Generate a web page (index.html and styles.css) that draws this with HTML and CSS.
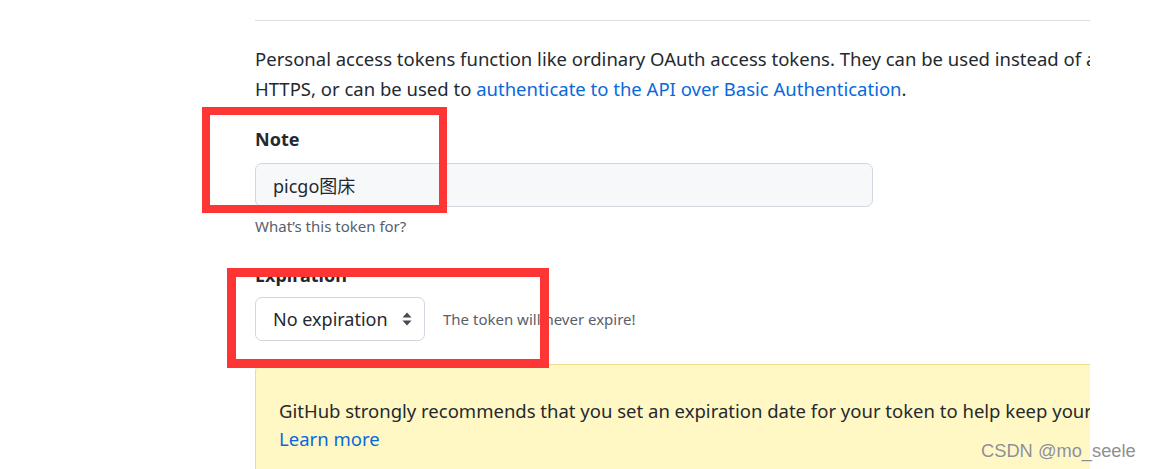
FILE: index.html
```html
<!DOCTYPE html>
<html lang="en">
<head>
<meta charset="utf-8">
<title>New personal access token</title>
<link rel="stylesheet" href="styles.css">
</head>
<body>
<div class="page">
  <div class="content">
    <div class="rule"></div>
    <p class="intro">Personal access tokens function like ordinary OAuth access tokens. They can be used instead of a<br>HTTPS, or can be used to <a href="#">authenticate to the API over Basic Authentication</a>.</p>
    <div class="field">
      <label class="label">Note</label>
      <div class="input">picgo图床</div>
      <p class="hint">What’s this token for?</p>
    </div>
    <div class="field field-exp">
      <label class="label">Expiration</label>
      <div class="select-row">
        <div class="select">
          <span>No expiration</span>
          <svg class="arrows" width="10" height="14" viewBox="0 0 10 14"><path d="M5 0.5 L9.5 5.5 H0.5 Z M5 13.5 L9.5 8.5 H0.5 Z" fill="#444d56"/></svg>
        </div>
        <span class="expire-note">The token will never expire!</span>
      </div>
    </div>
    <div class="flash">
      <p>GitHub strongly recommends that you set an expiration date for your token to help keep your</p>
      <a href="#">Learn more</a>
    </div>
  </div>
  <div class="mark mark-note"></div>
  <div class="mark mark-exp"></div>
  <div class="watermark">CSDN @mo_seele</div>
</div>
</body>
</html>
```

FILE: styles.css
```css
html, body {
  margin: 0;
  padding: 0;
  background: #ffffff;
}
body {
  font-family: "Noto Sans", "Noto Sans CJK SC", sans-serif;
  color: #24292f;
  height: 469px;
  overflow: hidden;
}
.page {
  position: relative;
  height: 469px;
}
.content {
  margin-left: 255px;
  width: 835px;
  height: 469px;
  overflow: hidden;
  padding-top: 20px;
  box-sizing: border-box;
}
.rule {
  width: 1000px;
  height: 1px;
  background: #d8dee4;
}
.intro {
  margin: 23px 0 0;
  font-size: 18.5px;
  line-height: 30px;
  white-space: nowrap;
}
a {
  color: #0969da;
  text-decoration: none;
}
.field {
  display: flex;
  flex-direction: column;
  align-items: flex-start;
}
.label {
  font-weight: 700;
  font-size: 18px;
  line-height: 27px;
  margin-top: 22px;
}
.field-exp .label {
  margin-top: 25px;
}
.input {
  margin-top: 10px;
  width: 618px;
  height: 44px;
  box-sizing: border-box;
  border: 1px solid #d0d7de;
  border-radius: 7px;
  background: #f6f8fa;
  padding: 0 17px;
  display: flex;
  align-items: center;
  font-size: 18px;
}
.hint {
  margin: 8px 0 0;
  font-size: 15px;
  line-height: 22px;
  color: #57606a;
}
.select-row {
  margin-top: 8px;
  display: flex;
  align-items: center;
  gap: 18px;
}
.select {
  width: 170px;
  height: 44px;
  box-sizing: border-box;
  border: 1px solid #d0d7de;
  border-radius: 7px;
  background: #ffffff;
  padding: 0 12px 0 17px;
  display: flex;
  align-items: center;
  justify-content: space-between;
  font-size: 18px;
}
.expire-note {
  font-size: 15px;
  color: #57606a;
}
.flash {
  margin-top: 23px;
  width: 1000px;
  box-sizing: border-box;
  background: #fff8c5;
  border: 1px solid #eedc8e;
  border-radius: 7px;
  padding: 31.5px 23px 40px;
  font-size: 18.5px;
  line-height: 28px;
}
.flash p {
  margin: 0;
  white-space: nowrap;
}
.mark {
  position: absolute;
  border: 8px solid #fd3535;
  box-sizing: border-box;
}
.mark-note {
  left: 202px;
  top: 107px;
  width: 245px;
  height: 106px;
}
.mark-exp {
  left: 227px;
  top: 268px;
  width: 322px;
  height: 100px;
  border-width: 9px;
}
.watermark {
  position: absolute;
  left: 981px;
  top: 439px;
  font-family: "Liberation Sans", sans-serif;
  font-size: 18.3px;
  line-height: 24px;
  color: #8f8f8f;
  white-space: nowrap;
  text-shadow: 0 0 1px #ffffff;
}
```
